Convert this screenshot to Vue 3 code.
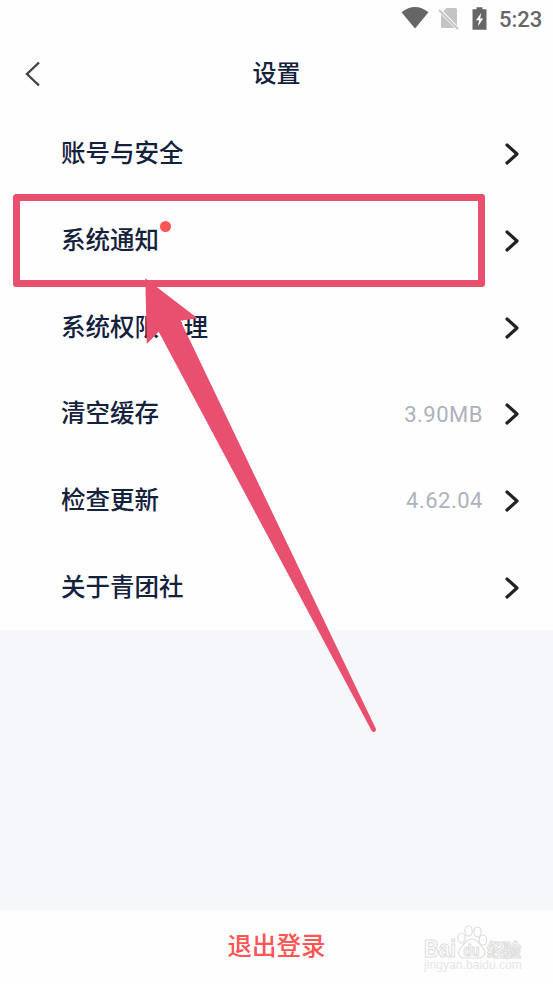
<script setup>
const rows = [
  { label: '账号与安全' },
  { label: '系统通知', dot: true },
  { label: '系统权限管理' },
  { label: '清空缓存', value: '3.90MB' },
  { label: '检查更新', value: '4.62.04' },
  { label: '关于青团社' },
]
</script>

<template>
  <div class="screen">
    <div class="status">
      <svg class="wifi" width="28" height="22" viewBox="0 0 28 22"><path d="M0.5 5.3Q14-5.300 27.500 5.300L14 21.500Z" fill="#666" /></svg>
      <svg class="sim" width="22" height="24" viewBox="0 0 22 24">
        <path d="M8.500 1H17.500Q19 1 19 2.500V18.500L5.300 4.200ZM3 7.200L16.800 21H4.500Q3 21 3 19.500Z" fill="#c4c4c4" />
        <path d="M1 3L20 22" stroke="#c4c4c4" stroke-width="1.800" />
      </svg>
      <svg class="battery" width="15" height="23" viewBox="0 0 15 23">
        <path d="M4.500 0.300H10.500V2.300H14.500V22.700H0.500V2.300H4.500Z" fill="#666" />
        <path d="M9.200 6L4 13.300H7L6 19.300L11.200 11.600H8.200Z" fill="#fff" />
      </svg>
      <span class="time">5:23</span>
    </div>
    <header class="header">
      <svg class="back" width="18" height="28" viewBox="0 0 18 28"><path d="M15 2.500L3 14L15 25.500" /></svg>
      <h1>设置</h1>
    </header>
    <main class="list">
      <div v-for="row in rows" :key="row.label" class="row">
        <span class="label">{{ row.label }}<i v-if="row.dot" class="dot" /></span>
        <span class="value">{{ row.value }}</span>
        <svg class="chevron" width="15" height="24" viewBox="0 0 15 24"><path d="M2 3L12 12L2 21" /></svg>
      </div>
    </main>
    <footer class="footer">
      <span class="logout">退出登录</span>
      <div class="watermark">
        <svg width="104" height="54" viewBox="0 0 104 54">
          <g class="outline">
            <text x="2" y="34" font-size="24" textLength="32" lengthAdjust="spacingAndGlyphs">Bai</text>
            <ellipse cx="39.500" cy="15" rx="3.700" ry="5" />
            <ellipse cx="46.500" cy="8" rx="3.700" ry="5" />
            <ellipse cx="55.500" cy="9" rx="3.700" ry="5" />
            <ellipse cx="61" cy="17" rx="3.700" ry="5" />
            <path d="M50 16C56 16 57 21 61 25C65 31 62 35 56 35H43C36 35 35 29 39 24C43 21 44 16 50 16Z" />
            <text x="41.500" y="33" font-size="16" textLength="16" lengthAdjust="spacingAndGlyphs">du</text>
            <text x="65" y="34" font-size="18" textLength="34">经验</text>
          </g>
          <text class="url" x="2" y="46" font-size="12" textLength="98" lengthAdjust="spacingAndGlyphs">jingyan.baidu.com</text>
        </svg>
      </div>
    </footer>
    <div class="highlight" />
    <svg class="arrow" width="553" height="984" viewBox="0 0 553 984">
      <path d="M145.300 278.300L197.500 318.300L180.500 320.800L376 729Q376 732.500 373 732Q372 731.500 371.500 730.500L158.700 331.700L146.800 344Z" />
    </svg>
  </div>
</template>

<style>
body { margin: 0; }
</style>

<style scoped>
.screen {
  position: relative;
  display: flex;
  flex-direction: column;
  width: 553px;
  height: 984px;
  overflow: hidden;
  background: #f5f7fb;
  color: #14213d;
  font-family: Roboto, "Noto Sans CJK SC", sans-serif;
}
.status {
  display: flex;
  align-items: flex-start;
  box-sizing: border-box;
  height: 38px;
  padding: 7px 0 0 401px;
  background: #fefefe;
}
.status svg { flex: none; }
.sim { margin-left: 9px; }
.battery { margin-left: 12px; }
.time {
  margin-left: 12px;
  color: #666;
  font-size: 22px;
  font-weight: 500;
  line-height: 25px;
}
.header {
  display: flex;
  align-items: center;
  justify-content: center;
  position: relative;
  height: 72px;
  background: #fefefe;
}
.back {
  position: absolute;
  left: 24px;
  top: 22px;
}
.back path {
  fill: none;
  stroke: #444;
  stroke-width: 2.4;
}
h1 {
  margin: 0;
  font-size: 24px;
  font-weight: 500;
  line-height: 36px;
}
.list {
  display: grid;
  grid-template-rows: repeat(6, 1fr);
  height: 520px;
  background: #fefefe;
}
.row {
  display: flex;
  align-items: center;
  padding: 2px 33px 0 61px;
}
.label {
  position: relative;
  font-size: 24.5px;
  font-weight: 500;
  line-height: 36px;
}
.dot {
  position: absolute;
  left: 99px;
  top: -2px;
  width: 11px;
  height: 11px;
  border-radius: 50%;
  background: #ff5555;
}
.value {
  margin-left: auto;
  color: #adb2bd;
  font-size: 22px;
  letter-spacing: 0.5px;
}
.chevron { margin-left: 22px; }
.chevron path {
  fill: none;
  stroke: #222;
  stroke-width: 3.2;
  stroke-linecap: round;
  stroke-linejoin: round;
}
.footer {
  position: relative;
  display: flex;
  justify-content: center;
  height: 74px;
  margin-top: auto;
  background: #fefefe;
}
.logout {
  margin-top: 19px;
  color: #ff5555;
  font-size: 24.5px;
  font-weight: 500;
  line-height: 36px;
}
.watermark {
  position: absolute;
  left: 422px;
  top: 13px;
}
.outline {
  fill: #fefefe;
  stroke: #dedede;
  stroke-width: 1.2;
  font-family: "Liberation Sans", "Noto Sans CJK SC", sans-serif;
  font-weight: 700;
}
.url {
  fill: #e6e6e6;
  font-family: "Liberation Sans", sans-serif;
}
.highlight {
  position: absolute;
  box-sizing: border-box;
  left: 13px;
  top: 194px;
  width: 472px;
  height: 93px;
  border: 7px solid #e95070;
  border-radius: 3px;
}
.arrow {
  position: absolute;
  left: 0;
  top: 0;
  fill: #e95070;
}
</style>
